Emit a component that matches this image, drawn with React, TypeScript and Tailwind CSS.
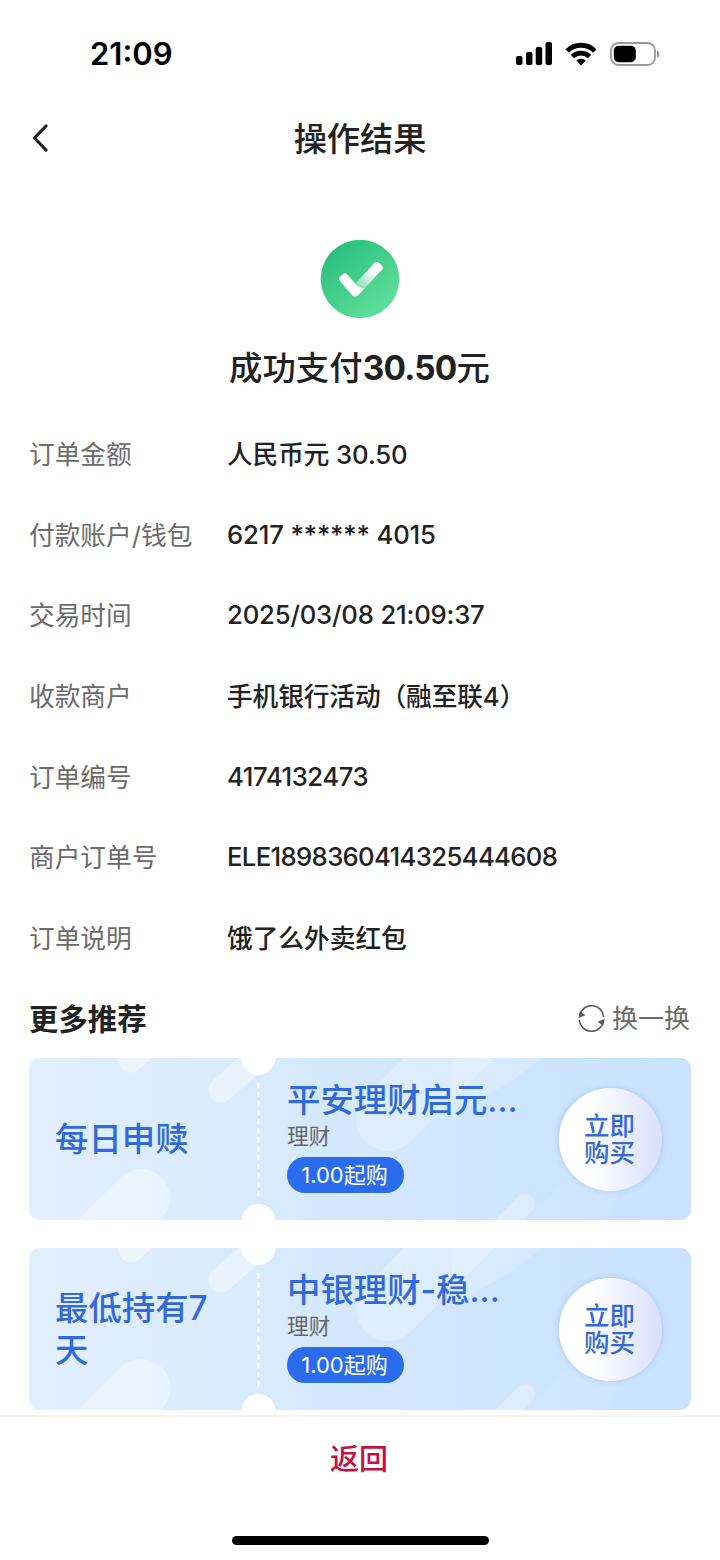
import { useState } from "react";

const details = [
  { label: "订单金额", value: "人民币元 30.50", style: "tracking-[-0.1px]" },
  { label: "付款账户/钱包", value: "6217 ****** 4015", style: "pb-[2px] tracking-[-0.15px]" },
  { label: "交易时间", value: "2025/03/08 21:09:37", style: "pb-[2px] tracking-[-0.18px]" },
  { label: "收款商户", value: "手机银行活动（融至联4）", style: "tracking-[-0.1px]" },
  { label: "订单编号", value: "4174132473", style: "pb-[2px] tracking-[-0.45px]" },
  { label: "商户订单号", value: "ELE1898360414325444608", style: "pb-[2px] tracking-[-0.65px]" },
  { label: "订单说明", value: "饿了么外卖红包", style: "tracking-normal" },
];

type Product = {
  id: string;
  highlight: string;
  name: string;
  category: string;
  minimum: string;
};

const products: Product[] = [
  { id: "a", highlight: "每日申赎", name: "平安理财启元...", category: "理财", minimum: "1.00起购" },
  { id: "b", highlight: "最低持有7天", name: "中银理财-稳...", category: "理财", minimum: "1.00起购" },
];

function StatusBar() {
  return (
    <div className="flex h-[107px] shrink-0 items-center justify-between pr-[60px] pl-[90px]">
      <span className="text-[31px] leading-none font-semibold text-black">21:09</span>
      <div className="flex items-center">
        <svg width="36" height="23" viewBox="0 0 36 23" fill="#000">
          <rect x="0" y="14" width="6.5" height="9" rx="2" />
          <rect x="10" y="10" width="6.5" height="13" rx="2" />
          <rect x="19.7" y="5" width="6.5" height="18" rx="2" />
          <rect x="29.5" y="0" width="6.5" height="23" rx="2" />
        </svg>
        <svg className="ml-[13px]" width="32" height="24" viewBox="0 0 32 24" fill="none" stroke="#000" strokeWidth="4.8">
          <path d="M2.2 9C9.8 1.3 22.2 1.3 29.8 9" />
          <path d="M7.4 14.6C12.2 10 19.8 10 24.6 14.6" />
          <path d="M11.3 18.6C14 16.1 18 16.1 20.7 18.6L16 23.4Z" fill="#000" stroke="none" />
        </svg>
        <svg className="ml-[13px]" width="50" height="24" viewBox="0 0 50 24" fill="none">
          <rect x="1" y="1" width="44" height="22" rx="7.5" stroke="#999" strokeWidth="1.8" />
          <rect x="3.8" y="3.8" width="22" height="16.4" rx="5" fill="#000" />
          <path d="M47 8.5C50 9.8 50 14.2 47 15.5Z" fill="#8a8a8a" />
        </svg>
      </div>
    </div>
  );
}

function SuccessIcon() {
  return (
    <svg width="80" height="80" viewBox="0 0 80 80" fill="none">
      <defs>
        <linearGradient id="disc" x1="12" y1="10" x2="64" y2="74" gradientUnits="userSpaceOnUse">
          <stop stopColor="#2abf80" />
          <stop offset="1" stopColor="#62e09a" />
        </linearGradient>
        <linearGradient id="tick" x1="38" y1="48" x2="52" y2="32" gradientUnits="userSpaceOnUse">
          <stop stopColor="#fff" stopOpacity="0.3" />
          <stop offset="1" stopColor="#fff" />
        </linearGradient>
      </defs>
      <circle cx="40" cy="40" r="39.3" fill="url(#disc)" />
      {/* long arm fades out where it tucks behind the short one */}
      <path
        d="M35.3 44.7L54.2 24.2Q56.4 21.9 58.6 23.6L61.7 26.2Q64 28.4 62 30.7L42.5 51.5Z"
        fill="url(#tick)"
      />
      <path
        d="M19.7 41.7Q18 39.4 20.1 37.4L23 34.9Q25.4 33.4 27.3 35.6L35.2 44.6Q38.6 48.9 44.4 49.2L38.4 56Q35 59 32 55.9Z"
        fill="#fff"
      />
    </svg>
  );
}

function RefreshIcon() {
  return (
    <svg width="27" height="27" viewBox="0 0 27 27" fill="none" stroke="#5c5c5c" strokeWidth="1.6">
      <path d="M1.8 9.5A12.2 12.2 0 0 1 25.7 12" />
      <path d="M25.2 17.5A12.2 12.2 0 0 1 1.3 15" />
      <path d="M1.8 6.2L0.4 13L7.6 10.2Z" fill="#5c5c5c" stroke="none" />
      <path d="M25.2 20.8L26.6 14L19.4 16.8Z" fill="#5c5c5c" stroke="none" />
    </svg>
  );
}

function CouponBackground({ id }: { id: string }) {
  return (
    <svg className="absolute inset-0" width="662" height="162" viewBox="0 0 662 162" fill="none">
      <defs>
        <linearGradient id={`bg-${id}`} x1="0" y1="0" x2="662" y2="0" gradientUnits="userSpaceOnUse">
          <stop stopColor="#e2effe" />
          <stop offset="0.45" stopColor="#d5e9fe" />
          <stop offset="1" stopColor="#c8e2ff" />
        </linearGradient>
        <clipPath id={`clip-${id}`}>
          <rect width="662" height="162" rx="11" />
        </clipPath>
      </defs>
      <g clipPath={`url(#clip-${id})`}>
        <rect width="662" height="162" fill={`url(#bg-${id})`} />
        <g stroke="#fff" strokeLinecap="round">
          <path d="M102 2L142 -34" strokeWidth="25" strokeOpacity="0.45" />
          <path d="M192 32L242 -12" strokeWidth="25" strokeOpacity="0.4" />
          <path d="M112 140L52 200" strokeWidth="58" strokeOpacity="0.38" />
          <path d="M359 61L439 -19" strokeWidth="64" strokeOpacity="0.25" />
          <path d="M496 146L466 176" strokeWidth="20" strokeOpacity="0.3" />
        </g>
        <path d="M424 0C421 14 422 25 427 33C425 45 418 54 410 64C440 44 478 32 512 0Z" fill="#fff" fillOpacity="0.18" />
        <path d="M494 162L530 130C560 108 598 116 588 140Q584 151 576 162Z" fill="#fff" fillOpacity="0.08" />
        <circle cx="229.5" cy="0" r="17" fill="#fff" />
        <circle cx="229.5" cy="163" r="17" fill="#fff" />
        <path d="M229.5 25V142" stroke="#fff" strokeWidth="2.2" strokeDasharray="5.5 3.5" strokeOpacity="0.9" />
      </g>
    </svg>
  );
}

function ProductCard({ product }: { product: Product }) {
  return (
    <div className="relative h-[162px] w-[662px] shrink-0">
      <CouponBackground id={product.id} />
      <div className="relative flex h-full items-center text-[#326adb]">
        <div className="w-[229px] shrink-0 pr-[44px] pl-[26px] text-[33.4px] leading-[42px] font-medium break-all">
          {product.highlight}
        </div>
        <div className="ml-[29px] w-[272px] shrink-0 pb-[9px]">
          <div className="text-[33.4px] leading-[46px] font-medium whitespace-nowrap">{product.name}</div>
          <div className="text-[21.7px] leading-[26px] text-[#666]">{product.category}</div>
          <div className="mt-[8px] flex h-[36px] w-[117px] items-center justify-center rounded-full bg-[#2b6cec] pr-[2px] text-[22px] leading-none text-white">
            {product.minimum}
          </div>
        </div>
        <button className="flex size-[103px] shrink-0 items-center justify-center rounded-full bg-linear-to-r from-white from-30% to-[#dadffe] text-[25.5px] leading-[27.5px] shadow-[0_0_6px_rgba(90,130,220,0.3)]">
          <span className="mr-[2px] w-[52px] font-medium">立即购买</span>
        </button>
      </div>
    </div>
  );
}

export default function App() {
  const [items, setItems] = useState(products);

  return (
    <div className="flex h-[1560px] w-[720px] flex-col overflow-hidden bg-white font-['Inter','Noto_Sans_CJK_SC',sans-serif] text-[#222]">
      <StatusBar />

      <header className="grid h-[61px] shrink-0 grid-cols-[1fr_auto_1fr] items-center px-[32px]">
        <button className="w-fit">
          <svg width="17" height="28" viewBox="0 0 17 28" fill="none" stroke="#222" strokeWidth="3.2" strokeLinecap="round" strokeLinejoin="round">
            <path d="M14 2L2.5 14L14 26" />
          </svg>
        </button>
        <h1 className="pt-[3px] text-[33.2px] leading-[48px] font-medium">操作结果</h1>
      </header>

      <main className="flex shrink-0 flex-col px-[29px]">
        <div className="mt-[71px] flex flex-col items-center">
          <SuccessIcon />
          <div className="mt-[24px] mr-[1px] text-[33.4px] leading-[50px] font-bold">
            <span className="font-medium">成功支付</span>
            <span className="tracking-[-0.8px]">30.50</span>
            <span className="font-medium">元</span>
          </div>
        </div>

        <dl className="mt-[22px]">
          {details.map((row) => (
            <div key={row.label} className="flex h-[80.6px] items-center text-[25.7px] leading-[36px]">
              <dt className="w-[198px] shrink-0 text-[#6b6b6b]">{row.label}</dt>
              <dd className={`font-medium whitespace-nowrap ${row.style}`}>{row.value}</dd>
            </div>
          ))}
        </dl>

        <div className="flex h-[79px] items-center justify-between">
          <h2 className="pt-[2px] text-[29.4px] leading-[40px] font-bold">更多推荐</h2>
          <button
            onClick={() => setItems([...items].reverse())}
            className="mr-[1px] flex items-center gap-[7px] text-[26px] leading-[36px] text-[#6b6b6b]"
          >
            <RefreshIcon />
            换一换
          </button>
        </div>

        <div className="flex flex-col gap-[28px]">
          {items.map((product) => (
            <ProductCard key={product.id} product={product} />
          ))}
        </div>
      </main>

      <footer className="mt-[5px] flex grow flex-col items-center border-t-2 border-[#f3f3f3]">
        <button className="mt-[21px] mr-[2px] text-[29px] leading-[44px] font-medium text-[#c3123f]">返回</button>
        <div className="mt-auto mb-[15px] h-[9px] w-[257px] rounded-full bg-black" />
      </footer>
    </div>
  );
}
